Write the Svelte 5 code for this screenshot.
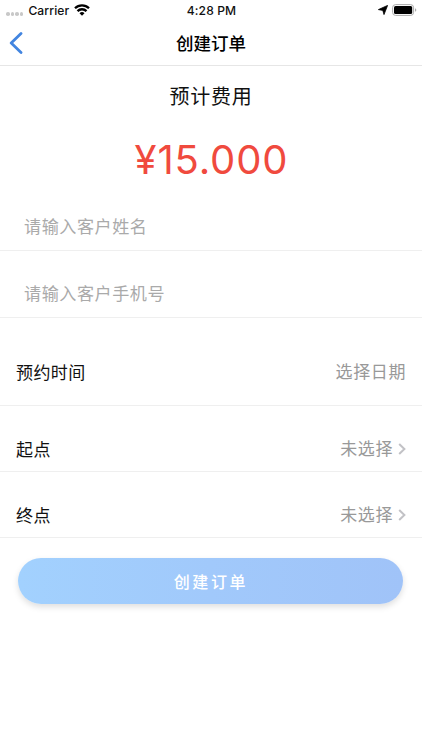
<script>
    let name = ''
    let phone = ''
    let price = '15.000'
    let date = '选择日期'
    let places = [
        { label: '起点', value: '未选择' },
        { label: '终点', value: '未选择' }
    ]
</script>

<div class="page">
    <div class="status">
        <div class="carrier">
            <span class="dots"><i></i><i></i><i></i><i></i></span>
            <span>Carrier</span>
            <svg class="wifi" width="16" height="12" viewBox="0 0 16 12">
                <path d="M1 4.3a10 10 0 0 1 14 0M3.5 7.1a6.4 6.4 0 0 1 9 0" />
                <path class="fill" d="M8 11.8 5.5 9.3a3.6 3.6 0 0 1 5 0z" />
            </svg>
        </div>
        <div class="time">4:28 PM</div>
        <div class="power">
            <svg class="location" width="10" height="10" viewBox="0 0 10 10">
                <path d="M9.6.4 6 9.6 4.8 5.4.4 4.6z" />
            </svg>
            <svg width="25" height="12" viewBox="0 0 25 12">
                <rect class="shell" x=".6" y=".6" width="21" height="10.8" rx="3" />
                <rect x="2" y="2" width="18.2" height="8" rx="1.6" />
                <path class="cap" d="M23 4.2c1.8.6 1.8 3 0 3.6z" />
            </svg>
        </div>
    </div>

    <header>
        <button class="back" aria-label="返回">
            <svg width="14" height="22" viewBox="0 0 14 22">
                <path d="M12 1.5 2.2 11 12 20.5" />
            </svg>
        </button>
        <h1>创建订单</h1>
    </header>

    <div class="cost">
        <div class="cost-title">预计费用</div>
        <div class="price">¥{price}</div>
    </div>

    <div class="field first">
        <input placeholder="请输入客户姓名" bind:value={name} />
    </div>
    <div class="field">
        <input placeholder="请输入客户手机号" bind:value={phone} />
    </div>

    <div class="row date">
        <span>预约时间</span>
        <span class="value">{date}</span>
    </div>
    {#each places as place}
        <div class="row">
            <span>{place.label}</span>
            <span class="value">
                {place.value}
                <svg width="8" height="12" viewBox="0 0 8 12">
                    <path d="M1.2 1 6.4 6 1.2 11" />
                </svg>
            </span>
        </div>
    {/each}

    <button class="submit">创建订单</button>
</div>

<style>
    :global(body) {
        margin: 0;
        background: #fff;
    }

    .page {
        height: 750px;
        overflow: hidden;
        background: #fff;
        color: #111;
        font-family: Inter, "Noto Sans CJK SC", sans-serif;
    }

    button {
        padding: 0;
        border: 0;
        background: none;
        font-family: inherit;
    }

    .status {
        display: grid;
        grid-template-columns: 1fr auto 1fr;
        align-items: center;
        height: 20px;
        padding: 0 5px 0 6px;
        font-size: 12.1px;
        font-weight: 500;
        letter-spacing: .1px;
    }

    .carrier,
    .power {
        display: flex;
        align-items: center;
    }

    .carrier {
        gap: 5px;
    }

    .power {
        justify-content: flex-end;
        gap: 4px;
    }

    .dots {
        display: flex;
        gap: 1px;
        margin-top: 8px;
    }

    .dots i {
        width: 3.6px;
        height: 3.6px;
        border-radius: 50%;
        background: #c8c8c8;
    }

    .wifi path {
        fill: none;
        stroke: #000;
        stroke-width: 2.3;
    }

    .wifi .fill {
        fill: #000;
        stroke: none;
    }

    .location path {
        stroke: #000;
        stroke-width: .8;
    }

    .shell {
        fill: none;
        stroke: #aaa;
        stroke-width: 1;
    }

    .cap {
        fill: #aaa;
    }

    header {
        display: grid;
        grid-template-columns: 60px 1fr 60px;
        align-items: center;
        height: 45px;
        border-bottom: 1px solid #e6e6e6;
    }

    .back {
        display: flex;
        padding-left: 9px;
    }

    .back path {
        fill: none;
        stroke: #4285e0;
        stroke-width: 2.8;
        stroke-linecap: round;
        stroke-linejoin: round;
    }

    h1 {
        margin: 2px 0 0;
        color: #000;
        font-size: 17.5px;
        font-weight: 500;
        line-height: 24px;
        text-align: center;
    }

    .cost {
        height: 133px;
        text-align: center;
    }

    .cost-title {
        padding-top: 16px;
        font-size: 20px;
        line-height: 30px;
        letter-spacing: .7px;
    }

    .price {
        margin-top: 23px;
        padding-left: 1px;
        color: #f04a3e;
        font-size: 40px;
        line-height: 50px;
        letter-spacing: .9px;
    }

    .field {
        display: flex;
        align-items: center;
        box-sizing: border-box;
        height: 67px;
        padding: 19px 24px 0;
        border-bottom: 1px solid #efefef;
    }

    .field.first {
        height: 52px;
        padding-top: 4px;
    }

    input {
        width: 100%;
        padding: 0;
        border: 0;
        outline: none;
        background: none;
        font-family: inherit;
        font-size: 17.1px;
        letter-spacing: .55px;
    }

    input::placeholder {
        color: #aaa;
    }

    .row {
        display: flex;
        align-items: center;
        justify-content: space-between;
        box-sizing: border-box;
        height: 66px;
        padding: 22px 16px 0;
        border-bottom: 1px solid #efefef;
        font-size: 17px;
        line-height: 24px;
        letter-spacing: .4px;
    }

    .row.date {
        height: 88px;
    }

    .value {
        display: flex;
        align-items: center;
        gap: 5px;
        margin-top: -1px;
        color: #999;
        letter-spacing: .6px;
    }

    .value path {
        fill: none;
        stroke: #c2c2c6;
        stroke-width: 2;
    }

    .submit {
        display: block;
        width: 385px;
        height: 46px;
        margin: 20px 0 0 18.4px;
        border-radius: 23px;
        background: linear-gradient(90deg, #a2d1fe, #a1c9fb 50%, #a0c3f8);
        box-shadow: 0 3px 6px rgba(0, 0, 0, .13);
        color: #fff;
        font-size: 16px;
        font-weight: 500;
        letter-spacing: 2.6px;
    }
</style>
